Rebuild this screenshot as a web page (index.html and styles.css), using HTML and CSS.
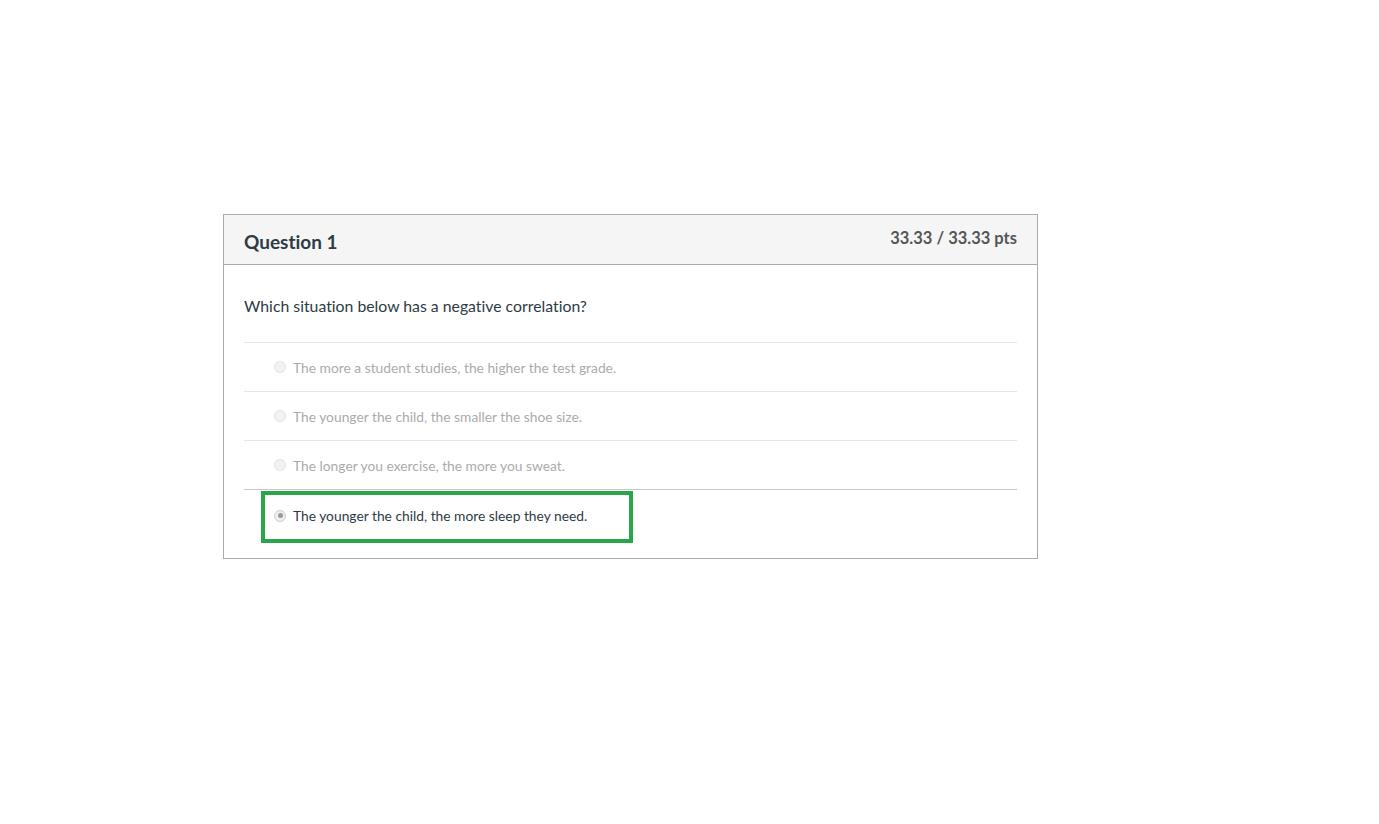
FILE: index.html
```html
<!DOCTYPE html>
<html>
  <head>
    <meta charset='utf-8'>
    <title>Question 1</title>
    <link rel="stylesheet" href="styles.css">
  </head>
  <body>
    <div class='page'>
      <div class='question'>
        <div class='header'>
          <span class='name'>Question 1</span>
          <span class='points'>33.33 / 33.33 pts</span>
        </div>
        <div class='content'>
          <p class='text'>Which situation below has a negative correlation?</p>
          <div class='answers'>
            <div class='answer'>
              <span class='radio'></span>
              <span class='label'>The more a student studies, the higher the test grade.</span>
            </div>
            <div class='answer'>
              <span class='radio'></span>
              <span class='label'>The younger the child, the smaller the shoe size.</span>
            </div>
            <div class='answer'>
              <span class='radio'></span>
              <span class='label'>The longer you exercise, the more you sweat.</span>
            </div>
            <div class='answer selected'>
              <div class='marked'>
                <span class='radio checked'></span>
                <span class='label'>The younger the child, the more sleep they need.</span>
              </div>
            </div>
          </div>
        </div>
      </div>
    </div>
  </body>
</html>
```

FILE: styles.css
```css
body {
  margin: 0;
  font-family: "Lato", "Liberation Sans", sans-serif;
  font-variant-ligatures: none;
  color: #2d3b45;
  background: #fff;
}
.page {
  padding-top: 214px;
  padding-left: 223px;
}
.question {
  width: 813px;
  border: solid 1px #aaa;
}
.header {
  display: flex;
  justify-content: space-between;
  align-items: flex-start;
  height: 50px;
  box-sizing: border-box;
  padding: 0 20px;
  background-color: #f5f5f5;
  border-bottom: solid 1px #aaa;
}
.name {
  font-size: 19px;
  font-weight: bold;
  line-height: 24px;
  margin-top: 15px;
}
.points {
  font-size: 16.5px;
  font-weight: bold;
  color: #555;
  line-height: 22px;
  margin-top: 12px;
}
.content {
  padding: 0 20px 15px 20px;
}
.text {
  margin: 0;
  padding-top: 31px;
  height: 46px;
  font-size: 15.8px;
  line-height: 20px;
}
.answer {
  display: flex;
  align-items: center;
  height: 48px;
  border-top: solid 1px #e6e6e6;
  padding-left: 30px;
  font-size: 13.8px;
  color: #ababab;
}
.answer.selected {
  display: block;
  height: auto;
  padding-left: 17px;
  padding-top: 1px;
  border-top-color: #c8c8c8;
}
.marked {
  display: inline-flex;
  align-items: center;
  box-sizing: border-box;
  height: 52px;
  width: 372px;
  padding: 0 0 3px 9px;
  border: solid 4px #27a74a;
  color: #2d3b45;
}
.radio {
  display: inline-block;
  width: 10px;
  height: 10px;
  border-radius: 50%;
  border: solid 1px #e2e2e2;
  background: #f2f2f2;
  margin-right: 7px;
  position: relative;
}
.radio.checked {
  border-color: #cfcfcf;
  background: #eee;
}
.radio.checked::after {
  content: "";
  position: absolute;
  left: 2.5px;
  top: 2.5px;
  width: 5px;
  height: 5px;
  border-radius: 50%;
  background: #9a9a9a;
}
```
